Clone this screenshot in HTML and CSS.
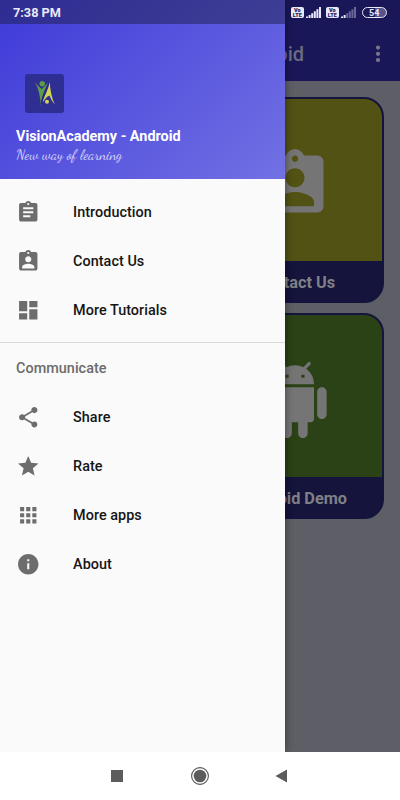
FILE: index.html
```html
<!DOCTYPE html>
<html lang="en">
<head>
<meta charset="utf-8">
<title>VisionAcademy - Android</title>
<link rel="stylesheet" href="styles.css">
</head>
<body>
<div class="phone">
  <div class="app">
    <header class="toolbar">
      <h1 class="toolbar-title">VisionAcademy - Android</h1>
      <svg class="overflow" viewBox="0 0 6 18"><circle cx="3" cy="2.6" r="2.1"/><circle cx="3" cy="8.8" r="2.1"/><circle cx="3" cy="15" r="2.1"/></svg>
    </header>
    <main class="cards">
      <section class="card">
        <div class="card-art olive"><svg viewBox="0 0 24 24"><path d="M19 3h-4.18C14.4 1.84 13.3 1 12 1c-1.3 0-2.4.84-2.82 2H5c-1.1 0-2 .9-2 2v14c0 1.1.9 2 2 2h14c1.1 0 2-.9 2-2V5c0-1.1-.9-2-2-2zm-7 0c.55 0 1 .45 1 1s-.45 1-1 1-1-.45-1-1 .45-1 1-1zm0 4c1.66 0 3 1.34 3 3s-1.34 3-3 3-3-1.34-3-3 1.34-3 3-3zm6 12H6v-1.4c0-2 4-3.1 6-3.1s6 1.1 6 3.1V19z"/></svg></div>
        <div class="card-label">Contact Us</div>
      </section>
      <section class="card">
        <div class="card-art green"><svg viewBox="0 0 24 24"><path d="M6 18c0 .55.45 1 1 1h1v3.5c0 .83.67 1.5 1.5 1.5s1.5-.67 1.5-1.5V19h2v3.5c0 .83.67 1.5 1.5 1.5s1.5-.67 1.5-1.5V19h1c.55 0 1-.45 1-1V8H6v10zM3.5 8C2.67 8 2 8.67 2 9.5v7c0 .83.67 1.5 1.5 1.5S5 17.33 5 16.5v-7C5 8.67 4.33 8 3.5 8zm17 0c-.83 0-1.5.67-1.5 1.5v7c0 .83.67 1.5 1.5 1.5s1.5-.67 1.5-1.5v-7c0-.83-.67-1.5-1.5-1.5zm-4.97-5.84l1.3-1.3c.2-.2.2-.51 0-.71-.2-.2-.51-.2-.71 0l-1.48 1.48C13.85 1.23 12.95 1 12 1c-.96 0-1.86.23-2.66.63L7.85.15c-.2-.2-.51-.2-.71 0-.2.2-.2.51 0 .71l1.31 1.31C6.97 3.26 6 5.01 6 7h12c0-1.99-.97-3.75-2.47-4.84zM10 5H9V4h1v1zm5 0h-1V4h1v1z"/></svg></div>
        <div class="card-label">Android Demo</div>
      </section>
    </main>
  </div>

  <aside class="drawer">
    <div class="drawer-header">
      <svg class="logo" viewBox="0 0 39 39">
        <rect width="39" height="39" rx="3" fill="#2f2f93"/>
        <circle cx="17.2" cy="9.8" r="2.7" fill="#5d9a4c"/>
        <path d="M10 8c1.5 2.5 4 4.5 6.6 7.2C19.5 12.5 22 10 24.7 7c-3.2 5.5-6.8 11-8.9 24.5C15.5 23 13.5 14.5 10 8z" fill="#5d9a4c"/>
        <path d="M24.7 7c.3 9 2 16.5 5.1 23.5-3-3.5-4.2-6.5-5.3-9-2.7 1-4.8 3.7-7 7C19.5 21 23.8 15.5 24.7 7z" fill="#d3d35a"/>
        <path d="M24.2 7.6C21.5 15 17.5 21 16.3 30" fill="none" stroke="#27277f" stroke-width="1.3"/>
        <circle cx="22" cy="27.7" r="2" fill="#d3d35a"/>
      </svg>
      <div class="drawer-title">VisionAcademy - Android</div>
      <div class="drawer-tagline">New way of learning</div>
    </div>
    <nav class="menu">
      <a class="item"><svg viewBox="0 0 24 24"><path d="M19 3h-4.180C14.400 1.840 13.300 1 12 1c-1.300 0-2.400.840-2.820 2H5c-1.100 0-2 .9-2 2v14c0 1.100.9 2 2 2h14c1.100 0 2-.9 2-2V5c0-1.100-.9-2-2-2zm-7 0c.55 0 1 .45 1 1s-.45 1-1 1-1-.45-1-1 .45-1 1-1zm2 14H7v-2h7v2zm3-4H7v-2h10v2zm0-4H7V7h10v2z"/></svg>Introduction</a>
      <a class="item"><svg viewBox="0 0 24 24"><path d="M19 3h-4.180C14.400 1.840 13.300 1 12 1c-1.300 0-2.400.840-2.820 2H5c-1.100 0-2 .9-2 2v14c0 1.100.9 2 2 2h14c1.100 0 2-.9 2-2V5c0-1.100-.9-2-2-2zm-7 0c.55 0 1 .45 1 1s-.45 1-1 1-1-.45-1-1 .45-1 1-1zm0 4c1.660 0 3 1.340 3 3s-1.340 3-3 3-3-1.340-3-3 1.340-3 3-3zm6 12H6v-1.400c0-2 4-3.100 6-3.100s6 1.100 6 3.100V19z"/></svg>Contact Us</a>
      <a class="item"><svg viewBox="0 0 24 24"><path d="M3 13h8V3H3v10zm0 8h8v-6H3v6zm10 0h8V11h-8v10zm0-18v6h8V3h-8z"/></svg>More Tutorials</a>
    </nav>
    <div class="subheader">Communicate</div>
    <nav class="menu-group">
      <a class="item"><svg viewBox="0 0 24 24"><path d="M18 16.080c-.76 0-1.440.3-1.960.77L8.910 12.700c.05-.23.09-.46.09-.7s-.04-.47-.09-.7l7.050-4.110c.54.5 1.250.81 2.040.81 1.660 0 3-1.340 3-3s-1.340-3-3-3-3 1.340-3 3c0 .24.040.47.090.7L8.040 9.810C7.500 9.310 6.790 9 6 9c-1.660 0-3 1.340-3 3s1.340 3 3 3c.79 0 1.500-.31 2.040-.81l7.120 4.160c-.05.21-.08.43-.08.65 0 1.610 1.310 2.920 2.920 2.920s2.920-1.310 2.920-2.920-1.310-2.920-2.920-2.920z"/></svg>Share</a>
      <a class="item"><svg viewBox="0 0 24 24"><path d="M12 17.270L18.180 21l-1.640-7.030L22 9.240l-7.190-.61L12 2 9.190 8.630 2 9.240l5.460 4.730L5.820 21z"/></svg>Rate</a>
      <a class="item"><svg viewBox="0 0 24 24"><path d="M4 8h4V4H4v4zm6 12h4v-4h-4v4zm-6 0h4v-4H4v4zm0-6h4v-4H4v4zm6 0h4v-4h-4v4zm6-10v4h4V4h-4zm-6 4h4V4h-4v4zm6 6h4v-4h-4v4zm0 6h4v-4h-4v4z"/></svg>More apps</a>
      <a class="item"><svg viewBox="0 0 24 24"><path d="M12 2C6.480 2 2 6.480 2 12s4.480 10 10 10 10-4.480 10-10S17.520 2 12 2zm1 15h-2v-6h2v6zm0-8h-2V7h2v2z"/></svg>About</a>
    </nav>
  </aside>

  <div class="status">
    <span class="clock">7:38 PM</span>
    <span class="volte"><span>Vo</span><span>LTE</span></span>
    <svg class="signal" viewBox="0 0 15 12"><path d="M0 9.500h2V11H0zM2.600 8h2v3h-2zM5.200 6.300h2V11h-2zM7.800 4.300h2V11h-2zM10.400 2.300h2V11h-2zM13 0h2v11h-2z"/></svg>
    <span class="volte second"><span>Vo</span><span>LTE</span></span>
    <svg class="signal" viewBox="0 0 15 12"><path d="M0 9.500h2V11H0zM2.600 8h2v3h-2z"/><path class="weak" d="M5.200 6.300h2V11h-2zM7.800 4.300h2V11h-2zM10.400 2.300h2V11h-2zM13 0h2v11h-2z"/></svg>
    <span class="battery">54</span>
  </div>

  <footer class="navbar">
    <svg viewBox="0 0 20 20"><path d="M4 4h12v12H4z"/></svg>
    <svg viewBox="0 0 20 20"><circle cx="10" cy="10" r="6.3"/><circle class="ring" cx="10" cy="10" r="8.4"/></svg>
    <svg viewBox="0 0 20 20"><path d="M2.5 10L14 3.5v13z"/></svg>
  </footer>
</div>
</body>
</html>
```
FILE: styles.css
```css
* { box-sizing: border-box; }
body {
  margin: 0;
  font-family: Roboto, "Liberation Sans", sans-serif;
}
svg { display: block; flex: none; }
.phone {
  position: relative;
  display: flex;
  flex-direction: column;
  width: 400px;
  height: 800px;
  overflow: hidden;
}
.app {
  flex: 1;
  background: #5e5e66;
}
.toolbar {
  display: flex;
  justify-content: flex-end;
  align-items: center;
  height: 81px;
  padding: 26px 19.5px 0 0;
  background: #1a1758;
}
.toolbar-title {
  margin: 0 70.5px 0 0;
  font-size: 20px;
  font-weight: 500;
  line-height: 28px;
  color: #6c6c80;
}
.overflow { width: 6px; height: 18px; fill: #77778b; }
.cards {
  display: grid;
  gap: 10px;
  padding: 16px 16px 0 206px;
}
.card {
  height: 206px;
  border: 2px solid #14143d;
  border-radius: 20px;
  background: #14143d;
  overflow: hidden;
}
.card-art {
  display: flex;
  justify-content: center;
  height: 161.5px;
  padding-top: 47px;
}
.card-art svg { width: 76px; height: 76px; fill: #757575; }
.olive { background: #525214; }
.green { background: #2a4216; }
.card-label {
  line-height: 44px;
  font-size: 16.3px;
  font-weight: 700;
  text-align: center;
  color: #808085;
}
.drawer {
  position: absolute;
  top: 0;
  left: 0;
  width: 285px;
  height: 752px;
  background: #fafafa;
  box-shadow: 0 0 8px rgba(0, 0, 0, .45);
}
.drawer-header {
  height: 179px;
  padding: 73.5px 16px 0;
  background: linear-gradient(135deg, #3e3ad9, #7271e3);
}
.logo { width: 39px; height: 39px; margin-left: 9.4px; }
.drawer-title {
  margin-top: 14.7px;
  font-size: 14.4px;
  font-weight: 700;
  line-height: 20px;
  white-space: nowrap;
  color: #fff;
}
.drawer-tagline {
  margin-top: -.7px;
  font-family: "Dancing Script", "Liberation Serif", serif;
  font-size: 14.4px;
  line-height: 16px;
  white-space: nowrap;
  color: #d6d5f8;
}
.menu {
  padding: 8.5px 0 7.5px;
  border-bottom: 1px solid #dadada;
}
.item {
  display: flex;
  align-items: center;
  gap: 32.2px;
  height: 49px;
  padding-left: 16.4px;
  font-size: 14.4px;
  font-weight: 500;
  letter-spacing: .04px;
  color: #151515;
}
.item svg { width: 24.5px; height: 24.5px; fill: #6d6d6d; }
.subheader {
  height: 49.8px;
  padding-left: 16px;
  line-height: 52px;
  font-size: 14.4px;
  font-weight: 500;
  letter-spacing: .04px;
  color: #6b6b6b;
}
.status {
  position: absolute;
  top: 0;
  left: 0;
  display: flex;
  align-items: center;
  width: 400px;
  height: 24px;
  padding: 1px 13px 0;
  background: linear-gradient(90deg, rgba(32, 32, 80, .52) 285px, transparent 285px);
  color: #e9e9fa;
}
.clock { flex: 1; font-size: 12.7px; font-weight: 700; }
.volte {
  display: flex;
  flex-direction: column;
  align-items: center;
  justify-content: center;
  width: 12.5px;
  height: 11px;
  border-radius: 2px;
  background: #e9e9fa;
  color: #1a1758;
  font-size: 5.5px;
  font-weight: 900;
  line-height: 5px;
}
.second { margin-left: 5px; }
.signal { width: 15px; height: 12px; margin-left: 2.5px; fill: #e9e9fa; }
.weak { fill: #69679a; }
.battery {
  width: 25.5px;
  height: 11.5px;
  margin-left: 5.5px;
  border: 1.2px solid #e9e9fa;
  border-radius: 6px;
  background: linear-gradient(90deg, #1a1758 54%, #57558a 54%);
  font-size: 9px;
  font-weight: 700;
  line-height: 10px;
  text-align: center;
}
.navbar {
  position: relative;
  z-index: 1;
  display: flex;
  align-items: center;
  justify-content: center;
  gap: 63px;
  height: 48px;
  background: #fff;
}
.navbar svg { width: 20px; height: 20px; fill: #5c5c5c; }
.navbar .ring { fill: none; stroke: #555; stroke-width: 1.1; }
```
